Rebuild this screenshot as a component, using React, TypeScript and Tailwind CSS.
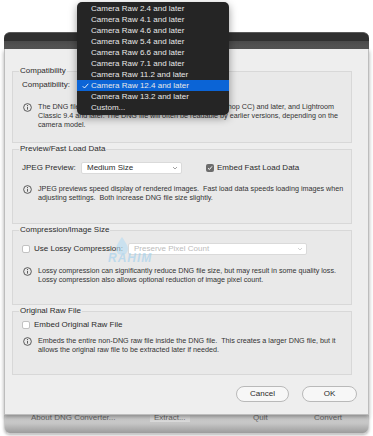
import React from 'react';

const MENU_ITEMS = [
  'Camera Raw 2.4 and later',
  'Camera Raw 4.1 and later',
  'Camera Raw 4.6 and later',
  'Camera Raw 5.4 and later',
  'Camera Raw 6.6 and later',
  'Camera Raw 7.1 and later',
  'Camera Raw 11.2 and later',
  'Camera Raw 12.4 and later',
  'Camera Raw 13.2 and later',
  'Custom...',
];
const SELECTED = 'Camera Raw 12.4 and later';

function InfoIcon() {
  return (
    <svg width="9" height="9" viewBox="0 0 10 10" className="shrink-0">
      <circle cx="5" cy="5" r="4.3" fill="none" stroke="#3a3a3a" strokeWidth="0.9" />
      <line x1="5" y1="4.4" x2="5" y2="7.4" stroke="#3a3a3a" strokeWidth="0.9" />
      <circle cx="5" cy="2.9" r="0.6" fill="#3a3a3a" />
    </svg>
  );
}

function Chevron({ color }: { color: string }) {
  return (
    <svg width="6" height="4" viewBox="0 0 6 4" className="shrink-0">
      <path d="M1 1 L3 3 L5 1" fill="none" stroke={color} strokeWidth="0.8" />
    </svg>
  );
}

function Checkbox({ checked }: { checked?: boolean }) {
  return checked ? (
    <div className="w-[8px] h-[8px] rounded-[2px] bg-[#6c6c6c] flex items-center justify-center shrink-0">
      <svg width="6" height="6" viewBox="0 0 6 6">
        <path d="M1 3.2 L2.4 4.5 L5 1.4" fill="none" stroke="#fff" strokeWidth="1" />
      </svg>
    </div>
  ) : (
    <div className="w-[8px] h-[8px] rounded-[2px] bg-white border border-[#c2c2c2] shrink-0" />
  );
}

function Group({ title, className, children }: { title: string; className: string; children: React.ReactNode }) {
  return (
    <fieldset className={`border border-[#d8d8d8] bg-[#e9e9e9] pl-[6px] pr-[8px] ${className}`}>
      <legend className="px-[1px] text-[8px] leading-[12px] text-[#2b2b2b]">{title}</legend>
      {children}
    </fieldset>
  );
}

function Info({ lines, className }: { lines: string[]; className: string }) {
  return (
    <div className={`flex ml-[3px] ${className}`}>
      <div className="w-[16px] pt-[1px] pl-[0.5px]">
        <InfoIcon />
      </div>
      <p className="text-[7.2px] leading-[9px] text-[#333] whitespace-pre">
        {lines.map((l, i) => (
          <React.Fragment key={i}>
            {l}
            {i < lines.length - 1 && <br />}
          </React.Fragment>
        ))}
      </p>
    </div>
  );
}

function Select({ label, width, disabled }: { label: string; width: string; disabled?: boolean }) {
  return (
    <div className={`${width} h-[12px] bg-white border border-[#dadada] rounded-[2px] flex items-center pl-[5px] pr-[3px]`}>
      <span className={`flex-1 text-[8px] leading-none ${disabled ? 'text-[#bcbcbc]' : 'text-[#2b2b2b]'}`}>{label}</span>
      <Chevron color={disabled ? '#c8c8c8' : '#8a8a8a'} />
    </div>
  );
}

export default function App() {
  return (
    <div className="relative w-[373px] h-[436px] bg-white overflow-hidden font-['Liberation_Sans',Arial,sans-serif] flex flex-col">
      <div className="h-[32px] shrink-0" />
      <div className="ml-[4px] w-[365px] flex flex-col">
        <div className="h-[9px] bg-[#303030] rounded-t-[6px] border-t border-[#5a5a5a]" />
        <div className="h-[8px] bg-gradient-to-b from-[#4a4a4a] to-[#565656]" />
        <div className="relative z-10 h-[366px] bg-[#eeeeee] border-x border-b border-[#bdbdbd] pl-[7px] pr-[16px] pt-[16px] flex flex-col shadow-[0_2px_4px_rgba(0,0,0,0.35)]">
          <Group title="Compatibility" className="h-[78px]">
            <div className="flex items-center ml-[3px] mt-[2px] h-[12px]">
              <span className="w-[59px] text-[8px] text-[#2b2b2b]">Compatibility:</span>
              <Select label="Camera Raw 12.4 and later" width="w-[120px]" />
            </div>
            <Info
              className="mt-[11px]"
              lines={[
                'The DNG file will be readable by Camera Raw 12.4 (Photoshop CC) and later, and Lightroom',
                'Classic 9.4 and later. The DNG file will often be readable by earlier versions, depending on the',
                'camera model.',
              ]}
            />
          </Group>
          <Group title="Preview/Fast Load Data" className="h-[81px]">
            <div className="flex items-center ml-[3px] mt-[7px] h-[12px]">
              <span className="w-[59px] text-[8px] text-[#2b2b2b]">JPEG Preview:</span>
              <Select label="Medium Size" width="w-[101px]" />
              <div className="ml-[24px]">
                <Checkbox checked />
              </div>
              <span className="ml-[3px] text-[8px] text-[#2b2b2b]">Embed Fast Load Data</span>
            </div>
            <Info
              className="mt-[10px]"
              lines={[
                'JPEG previews speed display of rendered images.  Fast load data speeds loading images when',
                'adjusting settings.  Both increase DNG file size slightly.',
              ]}
            />
          </Group>
          <Group title="Compression/Image Size" className="h-[81px]">
            <div className="flex items-center ml-[3px] mt-[7px] h-[12px]">
              <Checkbox />
              <span className="ml-[4px] w-[94px] text-[8px] text-[#2b2b2b]">Use Lossy Compression:</span>
              <Select label="Preserve Pixel Count" width="w-[179px]" disabled />
            </div>
            <Info
              className="mt-[11px]"
              lines={[
                'Lossy compression can significantly reduce DNG file size, but may result in some quality loss.',
                'Lossy compression also allows optional reduction of image pixel count.',
              ]}
            />
          </Group>
          <Group title="Original Raw File" className="h-[70px]">
            <div className="flex items-center ml-[3px] mt-[2px] h-[12px]">
              <Checkbox />
              <span className="ml-[4px] text-[8px] text-[#2b2b2b]">Embed Original Raw File</span>
            </div>
            <Info
              className="mt-[5px]"
              lines={[
                'Embeds the entire non-DNG raw file inside the DNG file.  This creates a larger DNG file, but it',
                'allows the original raw file to be extracted later if needed.',
              ]}
            />
          </Group>
          <div className="flex justify-end gap-[13px] mt-[11px] -mr-[5px]">
            <button className="w-[53px] h-[16px] rounded-full bg-[#f7f7f7] border border-[#b9b9b9] text-[8px] text-[#2b2b2b]">
              Cancel
            </button>
            <button className="w-[55px] h-[16px] rounded-full bg-[#f7f7f7] border border-[#b9b9b9] text-[8px] text-[#2b2b2b]">
              OK
            </button>
          </div>
        </div>
        <div className="h-[19px] overflow-hidden bg-gradient-to-b from-[#d2d2d2] via-[#c4c4c4] to-[#9c9c9c] rounded-b-[6px] border-x border-b border-[#c8c8c8] shadow-[0_1px_3px_rgba(0,0,0,0.3)]">
          <div className="flex items-center -mt-[3px] pl-[26px] text-[8px] text-[#6a6a6a]">
            <span className="w-[123px]">About DNG Converter...</span>
            <span className="w-[99px]">
              <span className="bg-[#d9d9d9] px-[4px] -ml-[4px]">Extract...</span>
            </span>
            <span className="w-[61px]">Quit</span>
            <span>Convert</span>
          </div>
        </div>
      </div>

      {/* watermark */}
      <div className="absolute left-[108px] top-[236px] z-20 flex flex-col items-start opacity-60 pointer-events-none">
        <svg width="16" height="20" viewBox="0 0 16 20" className="ml-[6px]">
          <path d="M8 1 C4 7 2 10 2 13 A6 6 0 0 0 14 13 C14 10 12 7 8 1 Z" fill="#b7dcf3" />
        </svg>
        <span className="-mt-[4px] text-[12px] leading-none font-bold italic tracking-[1px] text-[#9fd0ee]">RAHIM</span>
      </div>

      {/* popup menu */}
      <div className="absolute left-[77px] top-[2px] z-30 w-[152px] h-[113px] bg-[#252525] rounded-[5px] pt-[1px] shadow-[0_3px_8px_rgba(0,0,0,0.4)] overflow-hidden">
        {MENU_ITEMS.map((item) => {
          const sel = item === SELECTED;
          return (
            <div key={item} className={`relative h-[11px] flex items-center pl-[14px] ${sel ? 'bg-[#0b64d6]' : ''}`}>
              {sel && (
                <svg width="7" height="6" viewBox="0 0 7 6" className="absolute left-[5px] top-[2.5px]">
                  <path d="M0.7 3.2 L2.5 5 L6.3 0.8" fill="none" stroke="#fff" strokeWidth="0.9" />
                </svg>
              )}
              <span className="text-[8px] leading-none text-[#e8e8e8]">{item}</span>
            </div>
          );
        })}
      </div>
    </div>
  );
}
